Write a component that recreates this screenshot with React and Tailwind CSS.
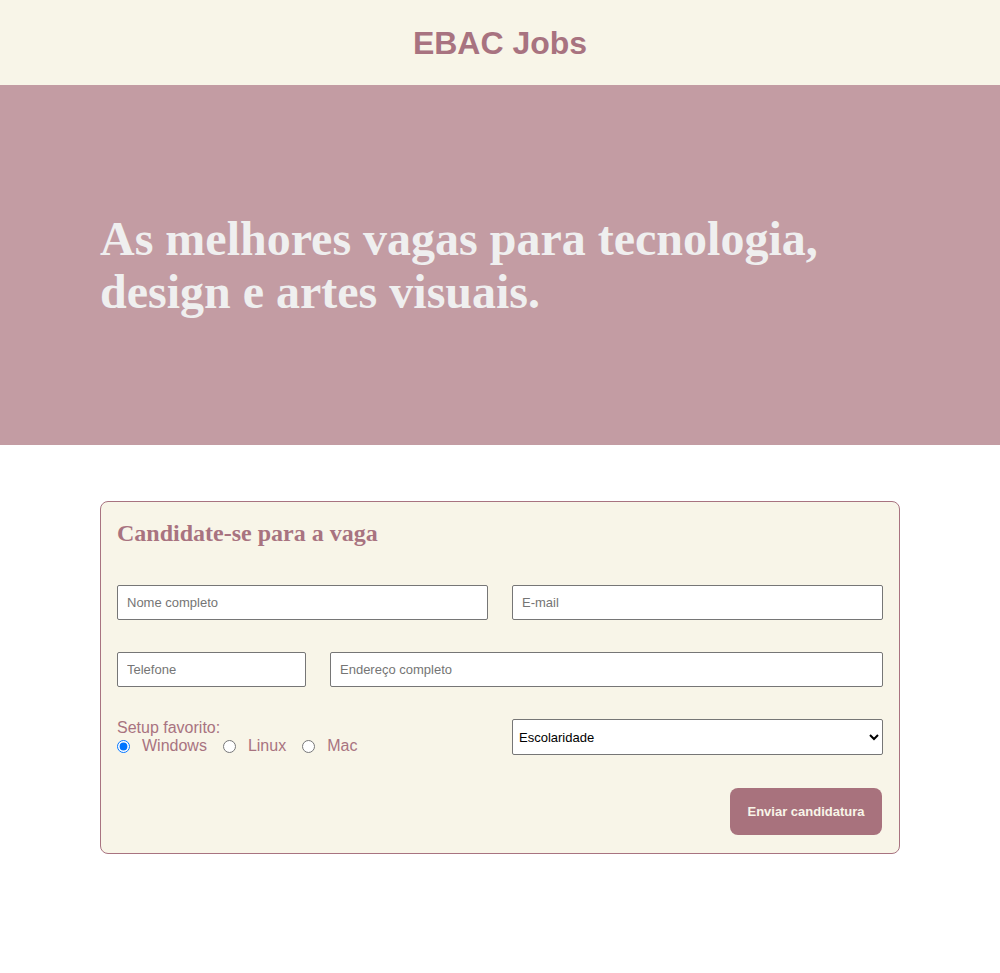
export default function App() {
  return (
    <div className="min-h-screen bg-white font-['Liberation_Sans',Arial,sans-serif]">
      <header className="flex h-[85px] items-center justify-center bg-[#f8f5e8]">
        <h1 className="text-[32px] font-bold text-[#a87380]">EBAC Jobs</h1>
      </header>

      <section className="flex h-[360px] items-center bg-[#c39ca3]">
        <h2 className="mx-auto w-[800px] font-['Liberation_Serif','Times_New_Roman',serif] text-[48px] leading-[53px] font-bold text-[#efefef]">
          As melhores vagas para tecnologia,
          <br />
          design e artes visuais.
        </h2>
      </section>

      <main className="pt-14 pb-20">
        <form className="mx-auto w-[800px] rounded-lg border border-[#a87380] bg-[#f8f5e8] px-4 pt-4 pb-[18px]">
          <h3 className="font-['Liberation_Serif','Times_New_Roman',serif] text-[24px] leading-[30px] font-bold text-[#a87380]">
            Candidate-se para a vaga
          </h3>

          <div className="mt-[37px] grid grid-cols-2 gap-6">
            <input
              type="text"
              placeholder="Nome completo"
              className="h-[35px] min-w-0 rounded-[2px] border border-[#767676] bg-white px-[9px] text-[13px] placeholder:text-[#757575]"
            />
            <input
              type="email"
              placeholder="E-mail"
              className="h-[35px] min-w-0 rounded-[2px] border border-[#767676] bg-white px-[9px] text-[13px] placeholder:text-[#757575]"
            />
          </div>

          <div className="mt-8 flex gap-6">
            <input
              type="tel"
              placeholder="Telefone"
              className="h-[35px] w-[189px] rounded-[2px] border border-[#767676] bg-white px-[9px] text-[13px] placeholder:text-[#757575]"
            />
            <input
              type="text"
              placeholder="Endereço completo"
              className="h-[35px] min-w-0 flex-1 rounded-[2px] border border-[#767676] bg-white px-[9px] text-[13px] placeholder:text-[#757575]"
            />
          </div>

          <div className="mt-8 grid grid-cols-2 gap-6">
            <div className="text-[16px] leading-[18px] text-[#a87380]">
              <p>Setup favorito:</p>
              <div className="flex items-center">
                <input type="radio" name="setup" defaultChecked className="m-0 mr-[12px] h-[13px] w-[13px]" />
                <label className="mr-[16px]">Windows</label>
                <input type="radio" name="setup" className="m-0 mr-[12px] h-[13px] w-[13px]" />
                <label className="mr-[16px]">Linux</label>
                <input type="radio" name="setup" className="m-0 mr-[12px] h-[13px] w-[13px]" />
                <label>Mac</label>
              </div>
            </div>
            <select className="h-[36px] min-w-0 rounded-[2px] border border-[#767676] bg-white px-[2px] text-[13px] text-black">
              <option>Escolaridade</option>
              <option>Ensino fundamental</option>
              <option>Ensino médio</option>
              <option>Ensino superior</option>
            </select>
          </div>

          <div className="mt-[33px] flex justify-end pr-px">
            <button
              type="submit"
              className="h-[47px] w-[152px] rounded-lg bg-[#a8727d] text-[13px] font-bold text-[#f8f5e8]"
            >
              Enviar candidatura
            </button>
          </div>
        </form>
      </main>
    </div>
  );
}
